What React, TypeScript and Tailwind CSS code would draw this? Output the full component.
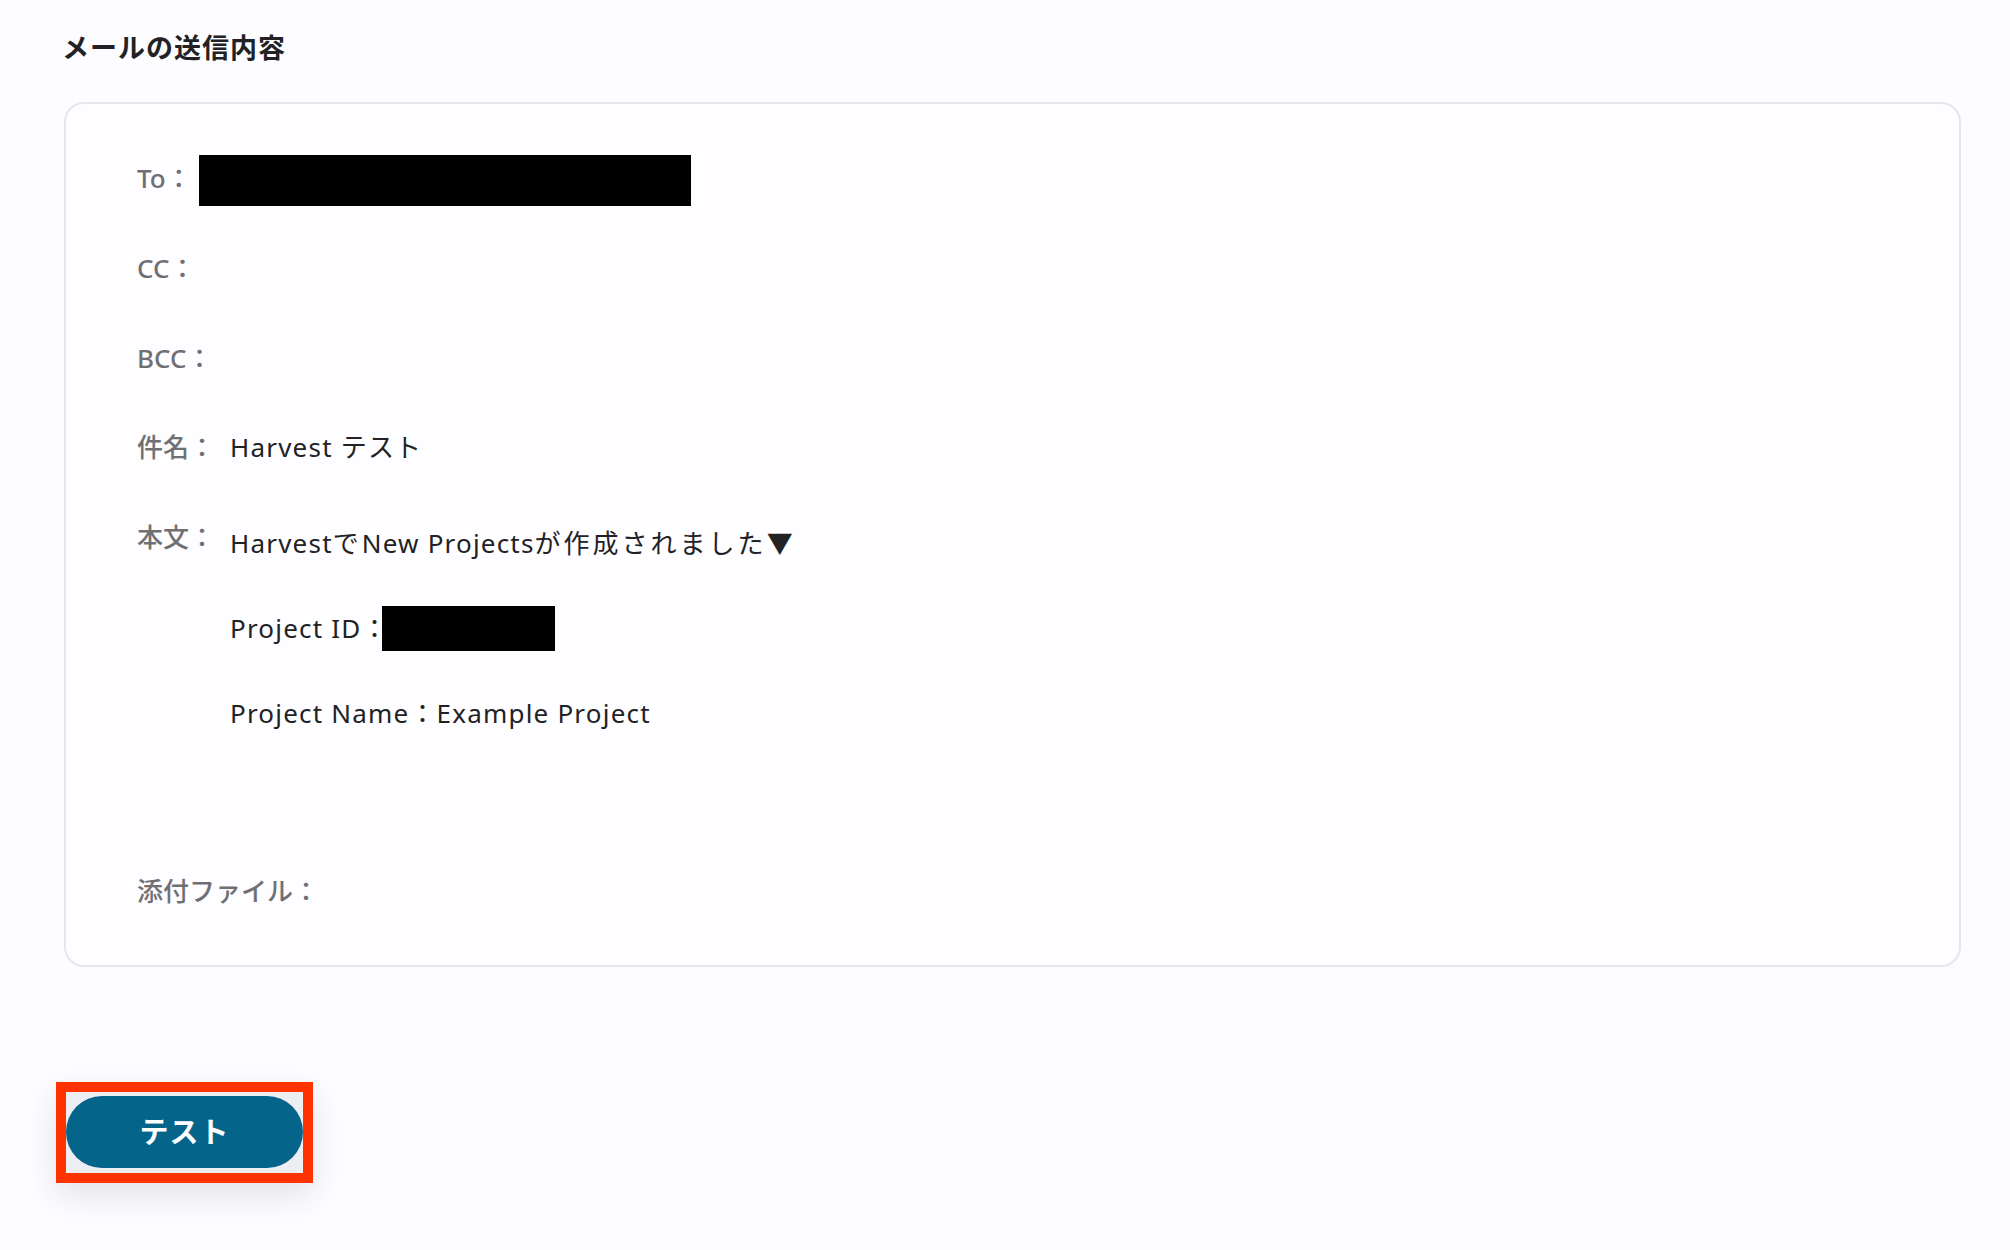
const font = { fontFamily: '"Noto Sans", "Noto Sans CJK JP", sans-serif' };

function Row({ label, children, className = "" }: { label: string; children?: React.ReactNode; className?: string }) {
  return (
    <div className={`flex items-start ${className}`}>
      <span className="text-[#707074] font-medium whitespace-nowrap tracking-normal">{label}</span>
      <div className="ml-2">{children}</div>
    </div>
  );
}

export default function App() {
  return (
    <div
      className="min-h-[1250px] w-[2010px] bg-[#fdfcfe] pl-[62px] pt-[31px] text-[#222225]"
      style={font}
    >
      <h2 className="text-[27px] font-bold leading-[34px] tracking-[1px]">メールの送信内容</h2>

      <div className="mt-[37px] ml-[2px] w-[1897px] h-[865px] rounded-[20px] border-2 border-[#e8e6eb] bg-[#fefdff] pl-[71px] pt-[50px] text-[26px] leading-[48px] tracking-[1.2px]">
        <Row label="To：">
          <div className="mt-[1px] ml-[-1px] h-[51px] w-[492px] bg-black" />
        </Row>
        <Row label="CC：" className="mt-[38px]" />
        <Row label="BCC：" className="mt-[42px]" />
        <Row label="件名：" className="mt-[41px]">
          <span className="ml-[7px]">Harvest テスト</span>
        </Row>
        <Row label="本文：" className="mt-[42px]">
          <div className="ml-[7px] mt-[6px] flex flex-col gap-[37px]">
            <span>
              Harvest<span className="tracking-[3px]">で</span>New Projects
              <span className="tracking-[3px]">が作成されました</span>▼
            </span>
            <span className="flex items-center">
              Project ID：
              <span className="ml-[-7px] inline-block h-[45px] w-[173px] bg-black" />
            </span>
            <span>Project Name：Example Project</span>
          </div>
        </Row>
        <Row label="添付ファイル：" className="mt-[130px]" />
      </div>

      <div className="mt-[115px] ml-[-6px] inline-block border-[10px] border-[#ff3300] bg-[#eceef2] pt-[4px] pb-[5px] shadow-[0_12px_30px_rgba(40,40,80,0.12)]">
        <button className="flex h-[72px] w-[237px] items-center justify-center rounded-full bg-[#04648a] text-[29px] font-bold tracking-[1px] text-white">
          テスト
        </button>
      </div>
    </div>
  );
}
